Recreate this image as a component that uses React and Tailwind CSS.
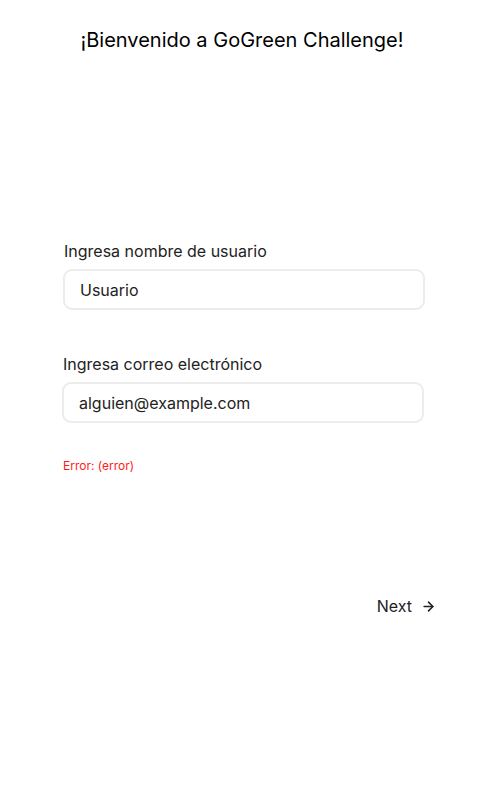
import { ArrowRight } from "lucide-react";

function Field({ label, value, className }) {
  return (
    <div className={className}>
      <label className="block pl-px text-[16px] leading-6 text-[#222222]">{label}</label>
      <input
        type="text"
        defaultValue={value}
        className="mt-[6px] block h-[41px] w-[362px] rounded-[9px] border-2 border-[#ececec] bg-white px-[15px] text-[16px] text-[#222222] outline-none"
      />
    </div>
  );
}

export default function App() {
  return (
    <div className="min-h-[793px] w-[480px] bg-white font-['Inter',sans-serif]">
      <h1 className="pl-[4px] pt-[26px] text-center text-[20px] leading-7 text-black">
        ¡Bienvenido a GoGreen Challenge!
      </h1>

      <Field
        className="ml-[63px] mt-[185px]"
        label="Ingresa nombre de usuario"
        value="Usuario"
      />
      <Field
        className="ml-[62px] mt-[42px]"
        label="Ingresa correo electrónico"
        value="alguien@example.com"
      />

      <p className="ml-[63px] mt-[35px] text-[12px] leading-4 text-[#ff1a1a]">
        Error: (error)
      </p>

      <div className="mt-[120px] flex justify-end pr-[44px]">
        <button className="flex items-center gap-[9px] text-[16px] leading-6 text-[#222222]">
          Next
          <ArrowRight size={15} strokeWidth={2.5} />
        </button>
      </div>
    </div>
  );
}
